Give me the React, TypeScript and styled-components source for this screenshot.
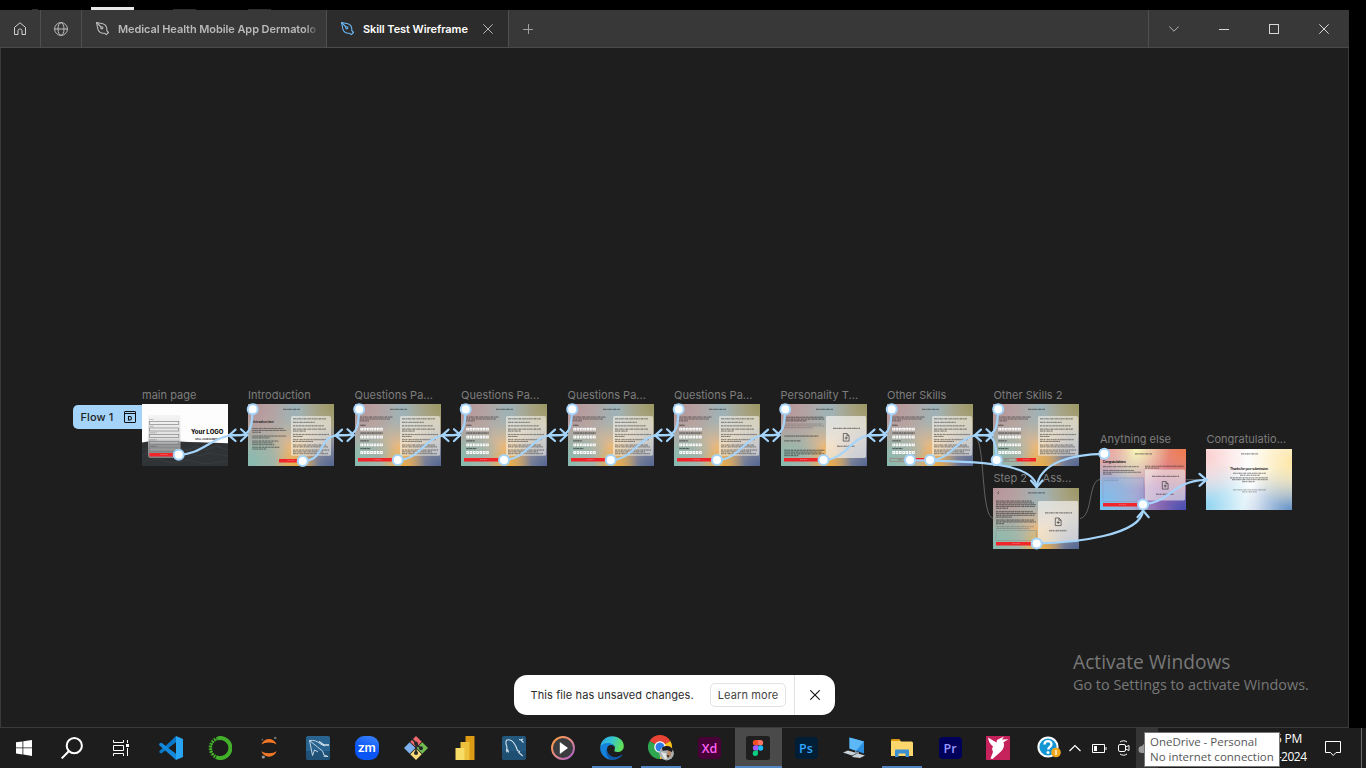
import React from "react";
import styled, { createGlobalStyle } from "styled-components";

const ui = `Inter, "Liberation Sans", sans-serif`;
const system = `"Open Sans", "Noto Sans", sans-serif`;
const wire = "#a5d4fa";

const GlobalStyle = createGlobalStyle`
  * { box-sizing: border-box; }
  body { margin: 0; background: #000; overflow: hidden; }
  #root { height: 768px; }
`;

const Desktop = styled.div`
  width: 1366px;
  height: 768px;
  display: flex;
  flex-direction: column;
  background: #000;
  font-family: ${ui};
`;

/* ---------- strip of the window behind ---------- */
const BehindStrip = styled.div`
  height: 10px;
  display: flex;
  align-items: flex-end;
  padding-left: 32px;
`;
const Sliver = styled.div<{ $w: number; $gap: number; $h?: number; $c?: string }>`
  width: ${(p) => p.$w}px;
  height: ${(p) => p.$h ?? 1}px;
  margin-right: ${(p) => p.$gap}px;
  background: ${(p) => p.$c ?? "#2e2e2e"};
`;

/* ---------- window ---------- */
const Window = styled.div`
  width: 1349px;
  height: 718px;
  display: flex;
  flex-direction: column;
`;
const TitleBar = styled.header`
  height: 38px;
  flex: none;
  display: flex;
  background: #383838;
  border-bottom: 1px solid #4b4b4b;
`;
const IconTab = styled.div<{ $w: number }>`
  width: ${(p) => p.$w}px;
  display: flex;
  align-items: center;
  justify-content: center;
  border-right: 1px solid #4f4f4f;
`;
const FileTab = styled.div<{ $w: number; $active?: boolean }>`
  width: ${(p) => p.$w}px;
  display: flex;
  align-items: center;
  padding-left: 13px;
  border-right: 1px solid #4f4f4f;
  background: ${(p) => (p.$active ? "#2c2c2c" : "transparent")};
`;
const TabTitle = styled.span<{ $active?: boolean; $w: number }>`
  width: ${(p) => p.$w}px;
  margin-left: 8px;
  white-space: nowrap;
  font-size: 11px;
  line-height: 16px;
  font-weight: 600;
  letter-spacing: -0.08px;
  color: ${(p) => (p.$active ? "#fff" : "#b9b9b9")};
  ${(p) => !p.$active && "mask-image: linear-gradient(90deg, #000 94%, transparent 101%);"}
`;
const NewTab = styled.div`
  width: 38px;
  display: flex;
  align-items: center;
  justify-content: center;
`;
const WindowControls = styled.div`
  margin-left: auto;
  width: 201px;
  display: flex;
  border-left: 1px solid #4f4f4f;
`;
const Control = styled.div`
  width: 50px;
  display: flex;
  align-items: center;
  justify-content: center;
`;
const Canvas = styled.main`
  position: relative;
  flex: 1;
  background: #1e1e1e;
  border: 1px solid #3a3a3a;
  border-top: 0;
`;

/* ---------- canvas nodes (positions are canvas coordinates) ---------- */
const Node = styled.section<{ $x: number; $y: number }>`
  position: absolute;
  left: ${(p) => p.$x - 1}px;
  top: ${(p) => p.$y - 48}px;
  width: 86px;
`;
const NodeLabel = styled.div<{ $lift: number }>`
  position: absolute;
  bottom: 100%;
  left: 0;
  padding-bottom: ${(p) => 2 + p.$lift}px;
  white-space: pre;
  font-size: 11px;
  line-height: 14px;
  letter-spacing: 0.02px;
  color: #7d7d7d;
`;
const soft = `
  radial-gradient(circle at 0% 0%, #b5929a 0, #b5929a00 42%),
  radial-gradient(ellipse at 56% 110%, #f4ae38 0, #f4ae3800 34%),
  radial-gradient(circle at 102% 108%, #465c90 0, #465c9000 42%),
  radial-gradient(circle at 104% 0%, #98955c 0, #98955c00 36%),
  radial-gradient(circle at 0% 95%, #86bbb0 0, #86bbb000 42%),
  radial-gradient(ellipse at 55% 8%, #9cb2b8 0, #9cb2b800 46%),
  radial-gradient(circle at 58% 68%, #f2bd82 0, #f2bd8200 44%),
  #b9afa4`;
const vivid = `
  radial-gradient(circle at 0% 0%, #f5a79b 0, #f5a79b00 32%),
  radial-gradient(ellipse at 42% 0%, #f8f7b8 0, #f8f7b800 48%),
  radial-gradient(circle at 100% 0%, #f07a4c 0, #f07a4c00 46%),
  radial-gradient(circle at 100% 105%, #3c48b4 0, #3c48b400 50%),
  radial-gradient(circle at 0% 90%, #6fc6f6 0, #6fc6f600 62%),
  radial-gradient(circle at 70% 60%, #d870b0 0, #d870b000 50%),
  #d89aac`;
const pale = `
  radial-gradient(circle at 0% 12%, #fbcfcf 0, #fbcfcf00 42%),
  radial-gradient(circle at 100% 22%, #fde6a6 0, #fde6a600 45%),
  radial-gradient(circle at 0% 95%, #8fd3f0 0, #8fd3f000 48%),
  radial-gradient(circle at 100% 105%, #5c8cc4 0, #5c8cc400 46%),
  #fdfdfd`;
const fills = { soft, vivid, pale, mono: "#fdfdfd" };
const Art = styled.div<{ $fill: keyof typeof fills }>`
  width: 86px;
  height: 61.5px;
  background: ${(p) => fills[p.$fill]};
  svg { display: block; font-family: ${ui}; }
`;
const FlowTag = styled.div`
  position: absolute;
  left: 71.5px;
  top: 357px;
  width: 69.5px;
  height: 24px;
  display: flex;
  align-items: center;
  justify-content: space-between;
  padding: 0 6px 0 8px;
  border-radius: 5px 0 0 5px;
  background: ${wire};
  color: #222;
  font-size: 11px;
  font-weight: 500;
  letter-spacing: 0.1px;
`;
const Wires = styled.svg`
  position: absolute;
  left: -1px;
  top: 0;
`;

type Ln = [number, number, number];
const bodies = ["1.7 .4 .9 .35 2.3 .4 1.2 .3", ".9 .3 2.1 .4 1.4 .4", "2.4 .4 1 .3 1.6 .4"];
const stems = [".35 .9 .35 1.6 .4 .5 .3 2.1", ".3 1.3 .4 .7 .35 1.9", ".4 .6 .35 1.5 .3 1.1 .4 2.3"];
const Lines = ({ rows, w = 0.7, o = 0.75 }: { rows: Ln[]; w?: number; o?: number }) => (
  <g stroke="#1c1c1c" opacity={o}>
    {rows.map(([x, y, l], i) => (
      <g key={i}>
        <path d={`M${x} ${y + 0.1}h${l}`} strokeWidth={w * 0.85} strokeDasharray={bodies[i % 3]} />
        <path d={`M${x} ${y - 0.1}h${l}`} strokeWidth={w * 1.9} strokeDasharray={stems[(i + 1) % 3]} opacity=".6" />
      </g>
    ))}
  </g>
);
const Heading = ({ y = 5.3 }: { y?: number }) => <Lines rows={[[35, y, 17]]} w={0.75} o={0.75} />;
const Button = ({ x, w, y = 54 }: { x: number; w: number; y?: number }) => (
  <g>
    <rect x={x} y={y} width={w} height={3.5} fill="#f0262b" />
    <path d={`M${x + w / 2 - 3.5} ${y + 1.7}h7`} stroke="#fff" strokeWidth=".6" strokeDasharray="1.4 .5" opacity=".5" />
  </g>
);
const Instructions = ({ x = 45 }: { x?: number }) => (
  <g>
    <rect x={x} y={12} width={40} height={39.8} rx={1.6} fill="#f4f2ea" opacity={0.6} />
    <Lines
      rows={[
        [x + 2, 14.8, 33], [x + 2, 18.3, 22], [x + 2, 21.8, 31], [x + 2, 25.1, 33], [x + 2, 27, 13],
        [x + 2, 30.5, 36], [x + 2, 32.4, 10], [x + 2, 35.6, 34], [x + 2, 37.4, 20], [x + 2, 41, 33],
        [x + 2, 42.8, 35], [x + 2, 46, 36], [x + 2, 47.8, 30], [x + 2, 49.6, 35],
      ]}
    />
  </g>
);
const Upload = ({ x, y, w, h, o = 0.7 }: { x: number; y: number; w: number; h: number; o?: number }) => {
  const cx = x + w / 2;
  const cy = y + h / 2;
  return (
    <g>
      <rect x={x} y={y} width={w} height={h} rx={1.4} fill="#f4f2ee" opacity={o} />
      <Lines rows={[[cx - 13, cy - 8.7, 27], [cx - 9, cy + 9.2, 18]]} w={0.8} />
      <path
        d={`M${cx - 2.7} ${cy - 3.5}h3.6l2.2 2.2v5.4h-5.8zM${cx + 0.9} ${cy - 3.5}v2.2h2.2M${cx + 0.2} ${cy - 0.6}v3.2M${cx - 1.4} ${cy + 1}h3.2`}
        fill="none" stroke="#3d3d3d" strokeWidth=".7"
      />
    </g>
  );
};
const Ratings = () => (
  <g>
    {[25.2, 33, 40.8, 48.5].map((y, i) => (
      <g key={y}>
        <Lines rows={[[5.5, y - 4, [5, 22, 8, 10][i]]]} w={0.85} o={0.85} />
        {[0, 1, 2, 3, 4, 5, 6].map((n) => (
          <g key={n}>
            <rect x={5.3 + n * 3.3} y={y - 1.4} width={2.7} height={2.8} rx=".4" fill="#fff" />
            <rect x={6.4 + n * 3.3} y={y - 0.4} width=".6" height=".8" fill="#888" />
          </g>
        ))}
      </g>
    ))}
  </g>
);
const Intro: Ln[] = [[4, 13, 34], [4, 14.9, 31], [4, 16.8, 10]];

const QuestionsArt = () => (
  <>
    <Heading /><Lines rows={Intro} /><Ratings /><Instructions /><Button x={3} w={39} />
  </>
);
const IntroArt = () => (
  <>
    <Heading />
    <text x="4.6" y="19.2" fontSize="3.6" fontWeight="600" fill="#1c1c1c">Introduction</text>
    <Lines
      rows={[
        [4.5, 24.5, 31], [4.5, 26.4, 34], [4.5, 28.2, 9], [4.5, 32, 34], [4.5, 33.8, 17],
        [4.5, 37, 26], [4.5, 38.8, 20], [4.5, 40.6, 22], [4.5, 43.2, 27], [4.5, 45, 14],
      ]}
    />
    <Instructions x={43} />
    <Button x={31} w={24} y={55} />
  </>
);
const MainArt = () => (
  <>
    <defs>
      <linearGradient id="sheet" x1="0" y1="0" x2="0" y2="1">
        <stop offset="0" stopColor="#f4f4f4" /><stop offset=".55" stopColor="#dedede" />
        <stop offset=".66" stopColor="#9a9b9c" /><stop offset="1" stopColor="#7f8182" />
      </linearGradient>
    </defs>
    <path d="M0 38.500l6-1 14 .8 10-1.200 16 .8 12 .3 14 .6 14 .5v24H0z" fill="#303335" />
    <path d="M36 44l10 2 8-4 10 4 10-4 12 4M36 51l10-3 10 4 12-3 18 3M0 58l16-3 14 4 18-3 14 4 24-3M0 44l6 2M0 51l6-2" stroke="#393d3f" fill="none" />
    <rect x="6" y="11" width="32.5" height="43" rx="2.5" fill="url(#sheet)" />
    {[17.3, 24, 30.5, 37.5, 44].map((y) => (
      <g key={y}>
        <rect x="7.4" y={y} width="29.4" height="3" fill="#ffffff22" stroke="#777" strokeWidth=".6" />
        <Lines rows={[[7.5, y - 1.7, y > 30 ? 7 : 4]]} w={0.5} o={0.6} />
      </g>
    ))}
    <Button x={7.4} w={29} y={49} />
    <text x="49" y="30.3" fontSize="6" fontWeight="800" fill="#161616" textLength="32.5">Your LOGO</text>
    <text x="53" y="35.8" fontSize="2.6" fontWeight="600" fill="#222" textLength="24">SKILL ASSESSMENT</text>
  </>
);
const PersonalityArt = () => (
  <>
    <Heading />
    <Lines rows={[[3.5, 13.2, 39], [3.5, 15, 40], [3.5, 16.8, 22], [3.5, 32, 34], [3.5, 36.8, 16], [3.5, 46.2, 40], [3.5, 48, 37], [3.5, 49.8, 40], [3.5, 51.6, 14]]} w={0.8} />
    <Lines rows={[[3.5, 20, 38], [3.5, 21.8, 40], [3.5, 23.6, 28]]} o={0.35} />
    <Upload x={45} y={12} w={40} h={42} />
    <Button x={3} w={39} />
  </>
);
const SkillsArt = ({ second }: { second?: boolean }) => (
  <>
    <Heading /><Lines rows={Intro} /><Ratings /><Instructions />
    <rect x="3" y="54.2" width="20" height="3" fill="none" stroke="#b0605c" strokeWidth=".5" />
    <Lines rows={[[11, 55.7, 5]]} w={0.6} o={0.5} />
    <Button x={second ? 23.5 : 24} w={second ? 19.5 : 18} />
  </>
);
const StepArt = () => (
  <>
    <Heading y={4.8} />
    <path d="M6 3.4l-1.3 1.3 1.3 1.3" stroke="#222" strokeWidth=".6" fill="none" />
    <Lines rows={[[3, 13, 36], [3, 14.8, 38], [3, 16.6, 40], [3, 18.4, 39], [3, 20.2, 12], [3, 23.6, 37], [3, 25.4, 40], [3, 27.2, 39], [3, 29, 16], [3, 32, 38], [3, 33.8, 40], [3, 35.6, 8]]} w={0.8} />
    <Lines rows={[[3, 38.6, 38], [3, 40.4, 34]]} o={0.35} />
    <rect x="3" y="42.4" width="40.5" height="10" fill="#8fc4b433" stroke="#8b9b94" strokeWidth=".6" />
    <Upload x={45} y={13} w={40} h={41} />
    <Button x={3} w={40} />
  </>
);
const AnythingArt = () => (
  <>
    <Heading y={4.8} />
    <text x="2.8" y="13.9" fontSize="3.3" fontWeight="700" fill="#1c1c1c" textLength="23">Congratulations</text>
    <Lines rows={[[3, 17.6, 36], [3, 21.4, 31], [3, 23.2, 38], [3, 25, 9], [45, 17.2, 39], [45, 19, 14]]} />
    <rect x="3" y="29" width="40.5" height="23.5" fill="#8fb4e855" stroke="#8e9ac4" strokeWidth=".6" />
    <Lines rows={[[4.5, 31.2, 14]]} w={0.5} o={0.35} />
    <Upload x={45} y={20.5} w={40} h={31} o={0.6} />
    <Button x={3} w={39} />
  </>
);
const ThanksArt = () => (
  <>
    <Heading y={4.8} />
    <text x="24" y="20.8" fontSize="3.4" fontWeight="600" fill="#1c1c1c" textLength="38">Thanks for your submission</text>
    <Lines rows={[[27, 24.2, 33], [34, 26.2, 20], [24, 28.8, 38], [26, 30.6, 36], [36, 32.6, 13]]} o={0.75} />
    <Lines rows={[[27, 40.8, 33], [36, 42.8, 15]]} w={0.6} o={0.6} />
  </>
);

const nodes: { label: string; x: number; y: number; fill: keyof typeof fills; art: React.ReactNode }[] = [
  { label: "main page", x: 142, y: 404, fill: "mono", art: <MainArt /> },
  { label: "Introduction", x: 248, y: 404, fill: "soft", art: <IntroArt /> },
  { label: "Questions Pa...", x: 354.5, y: 404, fill: "soft", art: <QuestionsArt /> },
  { label: "Questions Pa...", x: 461, y: 404, fill: "soft", art: <QuestionsArt /> },
  { label: "Questions Pa...", x: 567.5, y: 404, fill: "soft", art: <QuestionsArt /> },
  { label: "Questions Pa...", x: 674, y: 404, fill: "soft", art: <QuestionsArt /> },
  { label: "Personality T...", x: 780.5, y: 404, fill: "soft", art: <PersonalityArt /> },
  { label: "Other Skills", x: 887, y: 404, fill: "soft", art: <SkillsArt /> },
  { label: "Other Skills 2", x: 993.4, y: 404, fill: "soft", art: <SkillsArt second /> },
  { label: "Step 2     Ass...", x: 993.4, y: 487.6, fill: "soft", art: <StepArt /> },
  { label: "Anything else", x: 1100, y: 448.6, fill: "vivid", art: <AnythingArt /> },
  { label: "Congratulatio...", x: 1206.4, y: 448.6, fill: "pale", art: <ThanksArt /> },
];

const starts: [number, number][] = [
  [178.7, 454.8], [302.7, 461], [397.7, 460], [504, 460], [610.7, 460], [717, 460], [823.5, 460], [930, 460],
];
const dots: [number, number][] = [
  ...starts,
  ...starts.map((_, i): [number, number] => [252.7 + i * 106.5, 409.2]),
  [910, 460], [996.7, 460], [1104.3, 453.8], [1036.7, 543.4], [1143, 504.4],
];

const Connections = () => (
  <Wires width="1349" height="679" viewBox="0 48 1349 679">
    <g fill="none" stroke="#8d8d8d" strokeWidth=".6">
      <path d="M974 435.500C986 438 980 517 993.500 518.500M1080 518.500c13-2 8-38 20-39M1186 479.700h20" />
    </g>
    <g fill="none" stroke={wire} strokeWidth="2.2" strokeLinecap="round">
      {starts.map(([x, y], i) => {
        const r = 228 + i * 106.5;
        return (
          <g key={i}>
            <path d={`M${x} ${y}C${x + 22} ${y} ${r - 16} 437.5 ${r + 2} 435.5L${r + 19} 435`} />
            <path d={`M${r + 24.5} 409.2C${r + 24.5} 426 ${r + 22} 434 ${r + 13} 435.2H${r + 1}`} />
            <path d={`M${r + 13} 429.2l6.3 5.8-6.3 6M${r + 7.5} 429.6l-6.5 5.8 6.5 5.6`} />
          </g>
        );
      })}
      <path d="M996.7 460C996 446 995 436 986 435.3" />
      <path d="M910 460.3C980 461 1034 463 1036.7 487" />
      <path d="M1104.3 453.8C1074 454 1040 462 1036.7 487" />
      <path d="M1031 480.5l5.7 6.8 5.7-6.8" />
      <path d="M1036.7 543.4C1076 543 1140 535 1143 511" />
      <path d="M1137.5 517.2l5.6-6.6 5.6 6.6" />
      <path d="M1143 504.4C1170 503 1172 480.5 1206 479.8M1199.5 473.8l7 6-7 6" />
    </g>
    {dots.map(([x, y], i) => (
      <circle key={i} cx={x} cy={y} r="5" fill="#fff" stroke={wire} strokeWidth="2" />
    ))}
  </Wires>
);

/* ---------- overlays on the canvas ---------- */
const Toast = styled.div`
  position: absolute;
  left: 513px;
  bottom: 12px;
  width: 321px;
  height: 40px;
  display: flex;
  align-items: center;
  padding-left: 16.5px;
  border-radius: 13px;
  background: #fff;
  color: #2b2b2b;
  font-size: 11px;
`;
const ToastText = styled.span`
  width: 179.5px;
  white-space: nowrap;
  letter-spacing: 0.1px;
`;
const LearnMore = styled.button`
  width: 76px;
  height: 24px;
  padding: 0;
  border: 1px solid #e2e2e2;
  border-radius: 5px;
  background: #fff;
  font: 11px ${ui};
  letter-spacing: 0.1px;
  color: #444;
`;
const ToastClose = styled.div`
  margin-left: 8px;
  flex: 1;
  height: 100%;
  display: flex;
  align-items: center;
  justify-content: center;
  border-left: 1px solid #e2e2e2;
`;
const Watermark = styled.div`
  position: absolute;
  left: 1072px;
  top: 601px;
  white-space: nowrap;
  font-family: ${system};
  color: #787878;
`;
const WatermarkTitle = styled.div`
  font-size: 19.2px;
  line-height: 26px;
`;
const WatermarkText = styled.div`
  font-size: 14.4px;
  line-height: 20px;
`;

/* ---------- taskbar ---------- */
const Taskbar = styled.footer`
  position: relative;
  height: 40px;
  display: flex;
  background: #1d1d1d;
  color: #fff;
`;
const Cell = styled.div<{ $w: number; $state?: "open" | "active" }>`
  width: ${(p) => p.$w}px;
  height: 40px;
  flex: none;
  display: flex;
  align-items: center;
  justify-content: center;
  background: linear-gradient(#5385c3, #5385c3) bottom / ${(p) => (p.$state === "active" ? "47px" : "40px")}
      ${(p) => (p.$state ? "2px" : "0")} no-repeat,
    linear-gradient(${(p) => (p.$state === "active" ? "#4a4a4a, #4a4a4a" : "#0000, #0000")}) center / 47px 40px no-repeat;
`;
const AdobeTile = styled.div<{ $bg: string; $fg: string }>`
  width: 23px;
  height: 22px;
  display: flex;
  align-items: center;
  justify-content: center;
  border-radius: 4px;
  background: ${(p) => p.$bg};
  color: ${(p) => p.$fg};
  font: 600 12.5px ${system};
`;
const ZoomTile = styled.div`
  width: 24px;
  height: 24px;
  display: flex;
  align-items: center;
  justify-content: center;
  border-radius: 9px;
  background: linear-gradient(200deg, #3f88ff, #0b55f5 55%);
  font: 600 12.5px ${ui};
  letter-spacing: -0.4px;
  padding-bottom: 2px;
`;
const Tray = styled.div`
  margin-left: auto;
  width: 332px;
  display: flex;
  align-items: center;
`;
const TrayItem = styled.div<{ $w: number; $hover?: boolean }>`
  width: ${(p) => p.$w}px;
  height: 40px;
  flex: none;
  display: flex;
  align-items: center;
  justify-content: center;
  background: ${(p) => (p.$hover ? "#353535" : "transparent")};
`;
const Clock = styled.div`
  width: 149px;
  display: flex;
  flex-direction: column;
  align-items: flex-end;
  font: 12px/18px ${system};
  letter-spacing: -0.2px;
  padding-bottom: 1px;
`;
const Time = styled.span`
  padding-right: 5px;
`;
const DateText = styled.span`
  letter-spacing: -0.5px;
  padding-right: 0.5px;
`;
const DesktopEdge = styled.div`
  width: 5px;
  height: 40px;
  margin-left: auto;
  border-left: 1px solid #6a6a6a;
`;
const Tooltip = styled.div`
  position: absolute;
  left: 1144px;
  top: 4px;
  width: 136px;
  height: 35px;
  padding: 1px 0 0 5px;
  border: 1px solid #767676;
  background: #fff;
  color: #575757;
  white-space: nowrap;
  font: 11.5px/15px ${system};
`;

const PenIcon = ({ color }: { color: string }) => (
  <svg width="15" height="15" viewBox="0 0 15 15" fill="none" stroke={color} strokeWidth="1.1" strokeLinejoin="round">
    <path d="M1.500 1.500l6.300 1.200c3 .8 4.300 3.400 4 7l1.700 1.800-2.300 2.200-1.800-1.500c-3.200.3-5.700-1.200-6.500-4z" />
    <path d="M1.500 1.500l4.500 4.500" /><circle cx="6.800" cy="6.800" r="1.100" />
  </svg>
);
const Cross = ({ size, color, w = 1 }: { size: number; color: string; w?: number }) => (
  <svg width={size} height={size} viewBox="0 0 10 10" stroke={color} strokeWidth={(w * 10) / size}><path d="M.3.3l9.4 9.4M9.7.3L.3 9.7" /></svg>
);
const Code = () => (
  <svg width="24" height="24" viewBox="0 0 24 24">
    <path d="M17 0L6.5 10 2.3 6.8.4 7.8v1.4L3.7 12 .4 15v1.4l1.9 1L17 6.3z" fill="#0a78c8" />
    <path d="M.4 7.8l1.9-1L17 17.8V24L.4 9.3z" fill="#1489db" />
    <path d="M17 0l7 3v18l-7 3z" fill="#27a4f2" />
  </svg>
);
const Anaconda = () => (
  <svg width="24" height="24" viewBox="0 0 24 24" fill="none">
    <path d="M10 2.3A10 10 0 1 1 8 21" stroke="#43b02a" strokeWidth="4" />
    <path d="M10 2.3A10 10 0 0 0 8 21" stroke="#43b02a" strokeWidth="3.4" strokeDasharray="1.6 1.1" />
    <path d="M9 3.5A9.3 9.3 0 0 0 7 20" stroke="#43b02a" strokeWidth="1" />
  </svg>
);
const Jupyter = () => (
  <svg width="20" height="24" viewBox="0 0 20 24">
    <path d="M2.3 8.6C5 1 15 1 17.7 8.6 14 5.8 6 5.8 2.3 8.6zM2.3 15C5 22.6 15 22.6 17.7 15 14 18 6 18 2.3 15z" fill="#f37726" />
    <circle cx="3.4" cy="3.7" r=".9" fill="#666" /><circle cx="16.2" cy="2" r="1.3" fill="#707070" /><circle cx="4.3" cy="21" r="1.6" fill="#9a9a9a" />
  </svg>
);
const MySql = ({ alt }: { alt?: boolean }) => (
  <svg width="24" height="24" viewBox="0 0 24 24" fill="none">
    <rect width="24" height="24" rx="2" fill={alt ? "#22587d" : "#29638f"} />
    <path d="M0 15h24v7a2 2 0 0 1-2 2H2a2 2 0 0 1-2-2z" fill="#1c4a6c" opacity=".7" />
    {alt ? (
      <path d="M6.500 16.500L5.800 14l-1 1.500c-.6-2 .5-3.500 0-5C4 8 2.800 5.500 5 4c3.500-1.200 7 2.500 9 6.500l1.500 4 2 1-.8 1 4 3.500M17 3.500l2 .5 2.500 2.500M21 3l-2 1" stroke="#d5e3ec" strokeWidth="1.100" />
    ) : (
      <>
        <path d="M6.500 19.500L3.500 4.500l8 6.500 5 4 1.500 4 4 1.500-4.500-.3M3.500 4.500c4-.5 8 .5 11 3.500l4 2M6.500 19.500l2-5.500 3.500 2" stroke="#c4d6e2" strokeWidth="1" />
        <path d="M13 5.500l5 3.500h5" stroke="#d5e3ec" strokeWidth="1.500" />
      </>
    )}
  </svg>
);
const Git = () => (
  <svg width="24" height="24" viewBox="0 0 24 24">
    <g transform="rotate(45 12 12)">
      <rect x="3.500" y="3.500" width="8.100" height="8.100" fill="#f0696c" /><rect x="12.400" y="3.500" width="8.100" height="8.100" fill="#74bc50" />
      <rect x="3.500" y="12.400" width="8.100" height="8.100" fill="#7fb0ef" /><rect x="12.400" y="12.400" width="8.100" height="8.100" fill="#f6dc78" />
    </g>
    <path d="M8 3l4 4v11M12 8l5 4.500" stroke="#25282c" strokeWidth="1.600" fill="none" />
    <circle cx="12" cy="7.500" r="2" fill="#25282c" /><circle cx="12" cy="17" r="2" fill="#25282c" /><circle cx="17" cy="12.300" r="2" fill="#25282c" />
  </svg>
);
const PowerBi = () => (
  <svg width="20" height="24" viewBox="0 0 20 24">
    <rect x="10.5" width="9" height="24" rx=".6" fill="#dd9a15" /><rect x="5.5" y="6" width="9" height="18" rx=".6" fill="#eec13c" /><rect x=".5" y="12" width="9" height="12" rx=".6" fill="#f7dc66" />
  </svg>
);
const Media = () => (
  <svg width="24" height="24" viewBox="0 0 24 24">
    <defs><linearGradient id="ring" x1="0" y1="0" x2="1" y2="1"><stop stopColor="#ff9e3d" /><stop offset=".5" stopColor="#e58a86" /><stop offset="1" stopColor="#a25bd0" /></linearGradient></defs>
    <circle cx="12" cy="12" r="11" fill="#3b3c40" stroke="url(#ring)" strokeWidth="1.9" /><path d="M8.8 6l8.2 6-8.2 6z" fill="#fff" />
  </svg>
);
const Edge = () => (
  <svg width="24" height="24" viewBox="0 0 24 24">
    <defs>
      <linearGradient id="edgeTop" x1="0" y1="0" x2="1" y2=".3"><stop stopColor="#2aa5e6" /><stop offset=".5" stopColor="#35c3d4" /><stop offset="1" stopColor="#5fe05c" /></linearGradient>
    </defs>
    <path d="M.2 11C1 4.5 6 .2 12 .2c7 0 11.8 4.5 11.8 9.8 0 4-3 6-6.3 6-2.7 0-3.7-.8-3-2 1.5-3-.5-6-4.5-6C5.5 8 1.5 9 .2 11z" fill="url(#edgeTop)" />
    <path d="M.2 11C1.5 8.5 4.5 7 8 7c4 0 6.5 2.3 6.5 5 0-1.5-1.5-3-3.5-3-4 0-5.5 5-2.5 9 2 2.7 6 4.5 10.5 2.5C17 22.8 14.5 23.8 12 23.8 5.5 23.8-.4 18 .2 11z" fill="#1583dc" />
    <path d="M8.5 10.5C6 13 7 17 9.5 19.2c3 2.5 8 2.8 12.300-.4.4-.3.8 0 .5.5-2.300 3.500-7 5-11.300 4.300C6 21.500 4.500 14 8.500 10.500z" fill="#0f58a8" />
  </svg>
);
const Chrome = () => (
  <svg width="26" height="26" viewBox="0 0 26 26">
    <path d="M12 12L1.6 6A12 12 0 0 1 22.4 6z" fill="#e94335" /><path d="M12 12L22.4 6A12 12 0 0 1 12 24z" fill="#fbc116" /><path d="M12 12l0 12A12 12 0 0 1 1.6 6z" fill="#2fa650" />
    <circle cx="12" cy="12" r="5.8" fill="#fff" /><circle cx="12" cy="12" r="4.5" fill="#2f7be8" />
    <circle cx="18.600" cy="18.200" r="7.300" fill="#a8b0b2" /><path d="M14 12.800c4-3 9-2.500 11 2l-1.500 2.500-4-2-5 .5z" fill="#1d1b1b" /><path d="M19.500 15.500l4 1.500-1 5-4 .5z" fill="#b98a6c" /><path d="M18.500 20l3 .5-1.500 2.500z" fill="#2a2422" /><path d="M13 17l5 1.500 1 5.500-3-.5z" fill="#e4e6e4" />
  </svg>
);
const Figma = () => (
  <svg width="24" height="24" viewBox="0 0 24 24">
    <rect width="24" height="24" rx="2.500" fill="#1f1f1f" />
    <path d="M12 4H9.500a2.600 2.600 0 0 0 0 5.300H12z" fill="#f24e1e" /><path d="M12 4h2.500a2.600 2.600 0 0 1 0 5.300H12z" fill="#ff7262" /><path d="M12 9.300H9.500a2.600 2.600 0 0 0 0 5.300H12z" fill="#a259ff" /><circle cx="14.600" cy="12" r="2.650" fill="#1abcfe" /><path d="M12 14.600H9.500A2.650 2.650 0 1 0 12 17.300z" fill="#0acf83" />
  </svg>
);
const RemotePc = () => (
  <svg width="24" height="24" viewBox="0 0 24 24">
    <path d="M7.500 1.500l14.500 4v12L7.500 12.500z" fill="#2d8fdf" /><path d="M7.500 1.500l14.500 4-8 9.200-6.500-2.200z" fill="#5db8f8" />
    <path d="M1 16.500l5-2 9 2.500-5 2.500zM12 19l4-1.500 7 2-5 2.500-8-1z" fill="#c9d2d8" /><path d="M13 15l4 1.200v2l-4-.8z" fill="#8b98a1" />
  </svg>
);
const Explorer = () => (
  <svg width="22" height="20" viewBox="0 0 22 20">
    <path d="M0 2.500A1.500 1.500 0 0 1 1.500 1H8l2 2.500h10.500A1.500 1.500 0 0 1 22 5v13H0z" fill="#fdd76b" /><path d="M0 2.500A1.500 1.500 0 0 1 1.500 1H8l1.500 2H0z" fill="#d9980e" />
    <path d="M4 12.500a1 1 0 0 1 1-1h12a1 1 0 0 1 1 1V19h-3.500v-3.500h-7V19H4z" fill="#3c8fd0" />
  </svg>
);
const Bird = () => (
  <svg width="24" height="24" viewBox="0 0 24 24">
    <rect width="24" height="24" fill="#c5215a" />
    <path d="M2 1.500L10.500 6.500 11 4l2.500-1.200L18 .5l-2 3 6.500-.2-5 3c1.500 4-.5 8-4 10.500L6.500 23 4.500 22.500l2.500-6.500-1-3 1-2.500C4 8 2.500 5 2 1.500z" fill="#fff" />
  </svg>
);

const apps: { icon: React.ReactNode; state?: "open" | "active" }[] = [
  { icon: <Code /> }, { icon: <Anaconda /> }, { icon: <Jupyter /> }, { icon: <MySql /> },
  { icon: <ZoomTile>zm</ZoomTile> }, { icon: <Git /> }, { icon: <PowerBi /> }, { icon: <MySql alt /> },
  { icon: <Media /> }, { icon: <Edge />, state: "open" }, { icon: <Chrome />, state: "open" },
  { icon: <AdobeTile $bg="#470137" $fg="#ff61f6">Xd</AdobeTile> },
  { icon: <Figma />, state: "active" },
  { icon: <AdobeTile $bg="#001e36" $fg="#31a8ff">Ps</AdobeTile> },
  { icon: <RemotePc /> }, { icon: <Explorer />, state: "open" },
  { icon: <AdobeTile $bg="#00005b" $fg="#9999ff">Pr</AdobeTile> },
  { icon: <Bird /> },
];

export default function App() {
  return (
    <Desktop>
      <GlobalStyle />
      <BehindStrip>
        <Sliver $w={6} $gap={53} />
        <Sliver $w={43} $gap={39} $h={3} $c="#e8e8e6" />
        <Sliver $w={23} $gap={52} />
        <Sliver $w={23} $gap={0} />
      </BehindStrip>
      <Window>
        <TitleBar>
          <IconTab $w={41}>
            <svg width="14" height="14" viewBox="0 0 14 14" fill="none" stroke="#d0d0d0">
              <path d="M1.500 5.400L7 .8l5.500 4.600v7.100H9V8.700C9 7.500 8 7 7 7s-2 .5-2 1.700v3.800H1.500z" strokeLinejoin="round" />
            </svg>
          </IconTab>
          <IconTab $w={41}>
            <svg width="14" height="14" viewBox="0 0 14 14" fill="none" stroke="#bdbdbd">
              <circle cx="7" cy="7" r="6.400" /><ellipse cx="7" cy="7" rx="3" ry="6.400" /><path d="M.5 7h13" />
            </svg>
          </IconTab>
          <FileTab $w={245}>
            <PenIcon color="#bcbcbc" />
            <TabTitle $w={199}>Medical Health Mobile App Dermatolo</TabTitle>
          </FileTab>
          <FileTab $w={182} $active>
            <PenIcon color="#6db9f5" />
            <TabTitle $w={120} $active>Skill Test Wireframe</TabTitle>
            <Cross size={10} color="#b5b5b5" />
          </FileTab>
          <NewTab>
            <svg width="10" height="10" viewBox="0 0 10 10" stroke="#a0a0a0"><path d="M5.500 0v10M0 5.500h10" /></svg>
          </NewTab>
          <WindowControls>
            <Control><svg width="10" height="6" viewBox="0 0 10 6" fill="none" stroke="#b5b5b5"><path d="M.3.5L5 5.200 9.700.5" /></svg></Control>
            <Control><svg width="10" height="2" viewBox="0 0 10 2"><rect width="10" height="1" y="1" fill="#d8d8d8" /></svg></Control>
            <Control><svg width="10" height="10" viewBox="0 0 10 10" fill="none" stroke="#d8d8d8"><rect x=".5" y=".5" width="9" height="9" /></svg></Control>
            <Control><Cross size={10} color="#d8d8d8" /></Control>
          </WindowControls>
        </TitleBar>
        <Canvas>
          {nodes.map((n, i) => (
            <Node key={i} $x={n.x} $y={n.y}>
              <NodeLabel $lift={n.y > 404 ? 0.8 : 0}>{n.label}</NodeLabel>
              <Art $fill={n.fill}>
                <svg width="86" height="62" viewBox="0 0 86 62">{n.art}</svg>
              </Art>
            </Node>
          ))}
          <FlowTag>
            Flow 1
            <svg width="12" height="12" viewBox="0 0 12 12" fill="none" stroke="#111">
              <rect x=".5" y=".5" width="11" height="11" rx=".5" /><path d="M.5 2.500h11" /><path d="M4.500 5.500h1.500c1.800 0 1.800 3.500 0 3.500H4.500z" strokeWidth="1.100" />
            </svg>
          </FlowTag>
          <Connections />
          <Toast>
            <ToastText>This file has unsaved changes.</ToastText>
            <LearnMore>Learn more</LearnMore>
            <ToastClose><Cross size={10} color="#111" w={1.1} /></ToastClose>
          </Toast>
          <Watermark>
            <WatermarkTitle>Activate Windows</WatermarkTitle>
            <WatermarkText>Go to Settings to activate Windows.</WatermarkText>
          </Watermark>
        </Canvas>
      </Window>
      <Taskbar>
        <Cell $w={48}>
          <svg width="16" height="16" viewBox="0 0 16 16" fill="#fff"><path d="M0 2.300L6.500 1.400v6.100H0zM7.300 1.300L16 0v7.500H7.300zM0 8.300h6.500v6.100L0 13.500zM7.300 8.300H16v7.600l-8.700-1.300z" /></svg>
        </Cell>
        <Cell $w={48}>
          <svg width="22" height="22" viewBox="0 0 22 22" fill="none" stroke="#fff" strokeWidth="2"><circle cx="13.300" cy="8.700" r="7.600" /><path d="M8 14l-7.300 7.400" /></svg>
        </Cell>
        <Cell $w={50}>
          <svg width="18" height="16" viewBox="0 0 18 16" fill="none" stroke="#fff"><path d="M1.500 0v2.500h10V0M1.500 16v-2.500h10V16M1.500 5.500h10v5h-10zM15.500 0v3M15.500 8v8" /><rect x="14" y="4" width="3" height="3" fill="#fff" stroke="none" /></svg>
        </Cell>
        {apps.map((a, i) => (
          <Cell key={i} $w={i < 12 ? 49 : 48} $state={a.state}>{a.icon}</Cell>
        ))}
        <Tray>
          <TrayItem $w={29}>
            <svg width="24" height="24" viewBox="0 0 24 24" fill="none">
              <circle cx="11" cy="11" r="9.600" fill="#1495d4" stroke="#fff" strokeWidth="2" />
              <path d="M7.500 8.500C7.500 4 14.500 4 14.500 8.300c0 2.600-3.300 2.600-3.300 5.200" stroke="#fff" strokeWidth="2.300" /><circle cx="11" cy="16.500" r="1.500" fill="#fff" />
              <circle cx="19" cy="16.500" r="4.800" fill="#f3a81c" /><path d="M19 14v5" stroke="#fff" strokeWidth="1.300" />
            </svg>
          </TrayItem>
          <TrayItem $w={24}><svg width="12" height="8" viewBox="0 0 12 8" fill="none" stroke="#fff" strokeWidth="1.200"><path d="M.5 7L6 1.500 11.500 7" /></svg></TrayItem>
          <TrayItem $w={25}><svg width="15" height="9" viewBox="0 0 15 9" fill="none" stroke="#fff"><path d="M.5.500h12v8H.500zM14 3v3" /><rect x="2" y="2" width="3" height="5" fill="#fff" stroke="none" /></svg></TrayItem>
          <TrayItem $w={24}><svg width="12" height="16" viewBox="0 0 12 16" fill="none" stroke="#fff"><rect x=".5" y="4.500" width="7" height="7" rx="1.500" /><path d="M7.500 7l3.500-1.500v5L7.500 9M2 2c2-1.600 5-1.600 7 0M2 14c2 1.600 5 1.600 7 0" /></svg></TrayItem>
          <TrayItem $w={22} $hover><svg width="18" height="12" viewBox="0 0 18 12"><path d="M4 11a3.500 3.500 0 0 1 0-7 5 5 0 0 1 9 0 3.500 3.500 0 0 1 1 7z" fill="#9a9a9a" /></svg></TrayItem>
          <Clock><Time>6 PM</Time><DateText>-2024</DateText></Clock>
          <TrayItem $w={51}>
            <svg width="16" height="17" viewBox="0 0 16 17" fill="none" stroke="#fff"><path d="M.5 1.500h15v11H11l-2.800 3-2.700-3h-5z" /></svg>
          </TrayItem>
          <DesktopEdge />
        </Tray>
        <Tooltip>OneDrive - Personal<br />No internet connection</Tooltip>
      </Taskbar>
    </Desktop>
  );
}
